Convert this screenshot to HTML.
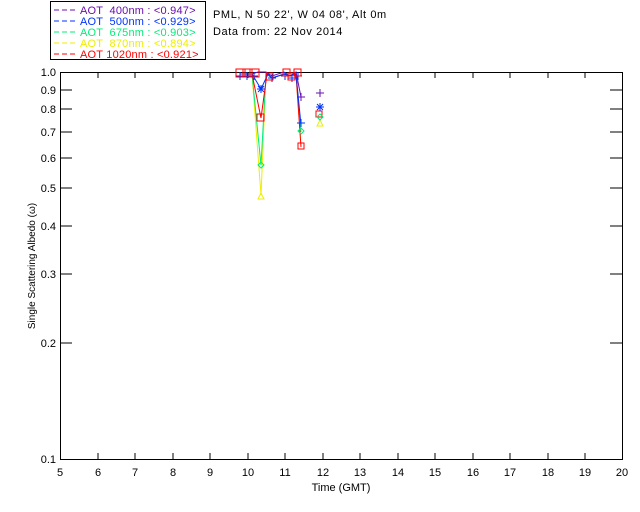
<!DOCTYPE html>
<html><head><style>
html,body{margin:0;padding:0;background:#fff;width:640px;height:512px;overflow:hidden}
svg{display:block}
text{font-family:"Liberation Sans",sans-serif;font-size:11px;white-space:pre}
.lg{letter-spacing:0.2px}
.hd{letter-spacing:0.6px}
</style></head><body>
<svg width="640" height="512" xmlns="http://www.w3.org/2000/svg">
<rect x="50.5" y="1.5" width="155" height="58" fill="#fff" stroke="#000"/>
<g class="lg">
<line x1="54" y1="10" x2="76" y2="10" stroke="#6a0dad" stroke-dasharray="5,3"/><text x="80" y="14" fill="#6a0dad">AOT  400nm : &lt;0.947&gt;</text>
<line x1="54" y1="21" x2="76" y2="21" stroke="#0033ff" stroke-dasharray="5,3"/><text x="80" y="25" fill="#0033ff">AOT  500nm : &lt;0.929&gt;</text>
<line x1="54" y1="32" x2="76" y2="32" stroke="#00ee77" stroke-dasharray="5,3"/><text x="80" y="36" fill="#00ee77">AOT  675nm : &lt;0.903&gt;</text>
<line x1="54" y1="43" x2="76" y2="43" stroke="#eeee00" stroke-dasharray="5,3"/><text x="80" y="47" fill="#eeee00">AOT  870nm : &lt;0.894&gt;</text>
<line x1="54" y1="54" x2="76" y2="54" stroke="#ff0000" stroke-dasharray="5,3"/><text x="80" y="58" fill="#ff0000">AOT 1020nm : &lt;0.921&gt;</text>
</g>
<text x="213" y="18" class="hd">PML, N 50 22', W 04 08', Alt 0m</text>
<text x="213" y="35" class="hd">Data from: 22 Nov 2014</text>
<rect x="60.5" y="72.5" width="562" height="387" fill="none" stroke="#000"/>
<g stroke="#000">
<path d="M98 72v6M135 72v6M173 72v6M210 72v6M248 72v6M285 72v6M323 72v6M360 72v6M398 72v6M435 72v6M473 72v6M510 72v6M548 72v6M585 72v6"/>
<path d="M98 459v-6M135 459v-6M173 459v-6M210 459v-6M248 459v-6M285 459v-6M323 459v-6M360 459v-6M398 459v-6M435 459v-6M473 459v-6M510 459v-6M548 459v-6M585 459v-6"/>
<path d="M60 90h12M60 109h12M60 132h12M60 158h12M60 188h12M60 226h12M60 274h12M60 343h12"/>
<path d="M622 90h-12M622 109h-12M622 132h-12M622 158h-12M622 188h-12M622 226h-12M622 274h-12M622 343h-12"/>
</g>
<g text-anchor="end">
<text x="56" y="76">1.0</text><text x="56" y="94">0.9</text><text x="56" y="113">0.8</text><text x="56" y="136">0.7</text><text x="56" y="162">0.6</text><text x="56" y="192">0.5</text><text x="56" y="230">0.4</text><text x="56" y="278">0.3</text><text x="56" y="347">0.2</text><text x="56" y="463">0.1</text>
</g>
<g text-anchor="middle">
<text x="60" y="476">5</text><text x="98" y="476">6</text><text x="135" y="476">7</text><text x="173" y="476">8</text><text x="210" y="476">9</text><text x="248" y="476">10</text><text x="285" y="476">11</text><text x="323" y="476">12</text><text x="360" y="476">13</text><text x="398" y="476">14</text><text x="435" y="476">15</text><text x="473" y="476">16</text><text x="510" y="476">17</text><text x="548" y="476">18</text><text x="585" y="476">19</text><text x="622" y="476">20</text>
<text x="341" y="491">Time (GMT)</text>
</g>
<text transform="translate(35,266) rotate(-90)" text-anchor="middle" style="font-size:10px">Single Scattering Albedo (ω)</text>
<g fill="none" stroke-width="1">
<polyline stroke="#eeee00" points="240,74 246,74 252,74 261,195 266,74 272,78 284,74 290,76 296,74 301,146"/>
<polyline stroke="#00ee77" points="240,74 246,74 252,74 261,165 266,74 272,78 284,74 290,76 296,74 301,132"/>
<polyline stroke="#ff0000" points="240,74 246,74 252,74 261,118 267,74 272,78 285,74 290,76 296,74 301,147"/>
<polyline stroke="#0033ff" points="240,74 246,74 252,74 261,89 268,74 272,78 284,74 290,76 296,74 301,125"/>
<polyline stroke="#6a0dad" points="240,74 246,74 252,74 258,72 266,72 272,76 284,72 290,76 296,72 301,97"/>
</g>
<g fill="none" stroke="#0033ff"><path d="M236 76h8M240 72v8M243 76h8M247 72v8M250 76h8M254 72v8M268 78h8M272 74v8M281 76h8M285 72v8M288 78h8M292 74v8M294 76h8M298 72v8"/></g>
<g fill="none" stroke="#ff0000">
<rect x="236" y="69" width="9" height="8"/><rect x="243" y="69" width="9" height="8"/><rect x="250" y="69" width="9" height="8"/><rect x="257" y="114" width="7" height="7"/><rect x="266" y="73" width="7" height="7"/><rect x="283" y="69" width="7" height="7"/><rect x="288" y="73" width="7" height="7"/><rect x="294" y="69" width="7" height="7"/><rect x="298" y="143" width="6" height="6"/><rect x="316" y="111" width="6" height="6"/>
</g>
<g fill="none" stroke="#6a0dad"><path d="M316 93h8M320 89v8M297 97h8M301 93v8"/></g>
<g fill="none" stroke="#0033ff"><path d="M316 107h8M320 103v8M257 89h8M261 85v8M297 123h8M301 119v8M258 86l6 6M264 86l-6 6M317 104l6 6M323 104l-6 6"/></g>
<g fill="none" stroke="#eeee00"><path d="M258 199l3-6 3 6zM317 126l3-6 3 6z"/></g>
<g fill="none" stroke="#00ee77"><path d="M261 162l3 3-3 3-3-3zM320 114l3 3-3 3-3-3zM301 128l3 3-3 3-3-3z"/></g>
</svg>
</body></html>
